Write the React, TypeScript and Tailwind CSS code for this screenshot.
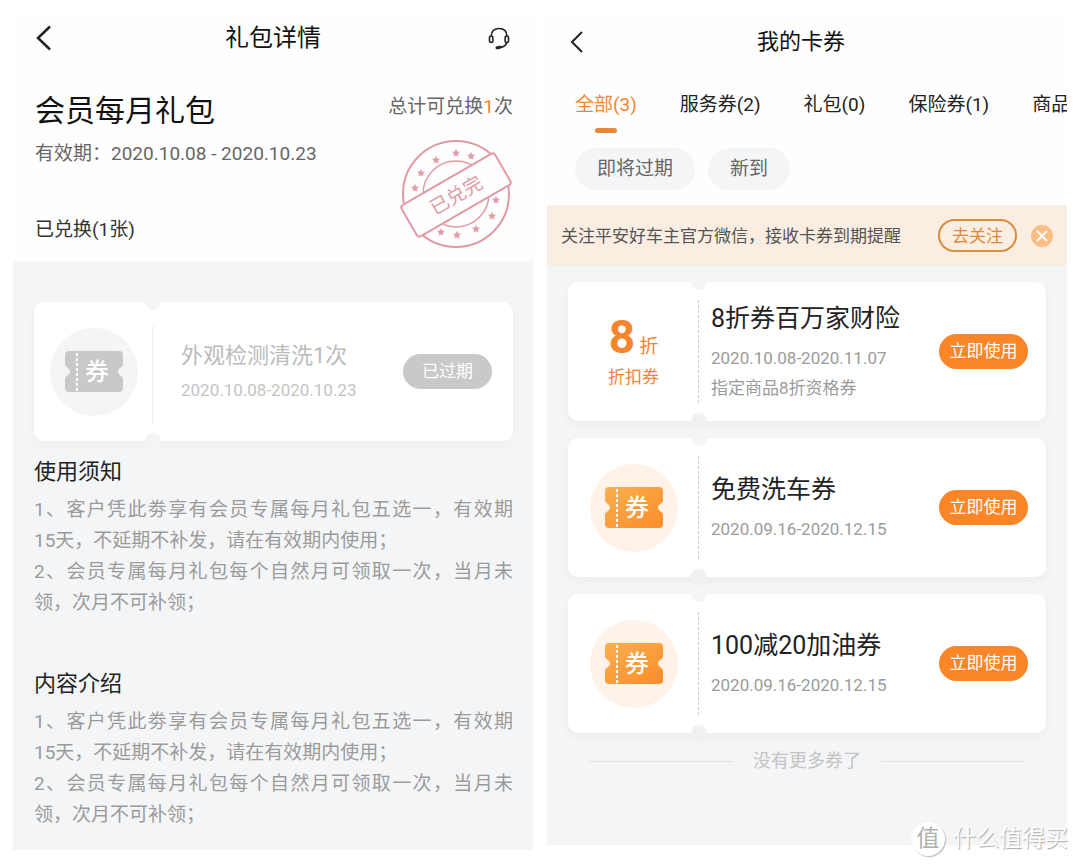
const tabs = ["全部(3)", "服务券(2)", "礼包(0)", "保险券(1)", "商品"]

const notes = [
  { title: "使用须知" },
  { title: "内容介绍" },
]

type Coupon = {
  title: string;
  date: string;
  desc?: string;
  discount?: string;
}

const coupons: Coupon[] = [
  { title: "8折券百万家财险", date: "2020.10.08-2020.11.07", desc: "指定商品8折资格券", discount: "8" },
  { title: "免费洗车券", date: "2020.09.16-2020.12.15" },
  { title: "100减20加油券", date: "2020.09.16-2020.12.15" },
]

const stars = [
  [76, 23], [91, 26], [56, 30], [41, 43], [35, 58],
  [116, 70], [112, 86], [96, 99], [77, 105], [61, 102],
]

const Ticket = ({ expired }: { expired?: boolean }) => (
  <div className={`flex size-[88px] items-center justify-center rounded-full ${expired ? "bg-[#f4f5f7]" : "bg-[#fff2e9]"}`}>
    <svg width={58} height={41} viewBox="0 0 58 41">
      <defs>
        <linearGradient id="ticket" x1="0" y1="0" x2="1" y2="1">
          <stop offset="0" stopColor="#fbb04e" />
          <stop offset="1" stopColor="#fb8c2a" />
        </linearGradient>
      </defs>
      <path
        d="M4 0H54A4 4 0 0 1 58 4V13.500C58 16 53 17 53 20.500S58 25 58 27.500V37A4 4 0 0 1 54 41H4A4 4 0 0 1 0 37V27.500C0 25 5 24 5 20.500S0 16 0 13.500V4A4 4 0 0 1 4 0Z"
        fill={expired ? "#c9c9c9" : "url(#ticket)"}
      />
      <path d="M12 2V40" stroke="#fff" strokeWidth={2} strokeDasharray="3 2" />
      <text x={32} y={29} textAnchor="middle" fontSize={24} fontWeight={500} fill="#fff">券</text>
    </svg>
  </div>
)

const Notches = ({ bottom }: { bottom: string }) => (
  <>
    <span className="absolute -top-2 -left-2 size-4 rounded-full bg-[#f4f5f7]" />
    <span className={`absolute -bottom-2 -left-2 size-4 rounded-full ${bottom}`} />
  </>
)

const Stamp = () => (
  <svg width={150} height={130} viewBox="0 0 150 130" fill="none" stroke="#e29aa5" strokeWidth={2}>
    <circle cx={76} cy={64} r={53} />
    <circle cx={76} cy={64} r={33} strokeWidth={1.500} />
    {stars.map(([x, y]) => (
      <path
        key={`${x}-${y}`}
        transform={`translate(${x} ${y})`}
        d="M0-3.600L1.100-1.200L3.500-1L1.700.700L2.200 3.100L0 1.900L-2.200 3.100L-1.700.700L-3.500-1L-1.100-1.200Z"
        fill="#e29aa5"
        stroke="#e29aa5"
        strokeWidth={0.500}
      />
    ))}
    <g transform="rotate(-30 76 65)">
      <rect x={22} y={47} width={108} height={36} rx={3} fill="#fefefe" />
      <text x={76} y={72} textAnchor="middle" fontSize={19} fill="#e29aa5" stroke="none">已兑完</text>
    </g>
  </svg>
)

const GiftDetail = () => (
  <main className="flex flex-col bg-[#fefefe]">
    <header className="flex h-[50px] items-center justify-between pr-[22px] pl-[22px]">
      <button aria-label="返回" className="w-6">
        <svg width={18} height={26} viewBox="0 0 18 26" fill="none" stroke="#222" strokeWidth={2.500}>
          <path d="M15 1.500L3 13L15 24.500" />
        </svg>
      </button>
      <h2 className="text-[24px] leading-8 text-[#111]">礼包详情</h2>
      <button aria-label="客服">
        <svg width={24} height={24} viewBox="0 0 24 24" fill="none" stroke="#222" strokeWidth={1.600}>
          <path d="M4.200 10C4.200 5 7.500 2.500 12 2.500S19.800 5 19.800 10" />
          <rect x={2.500} y={10} width={3.400} height={6.500} rx={1.700} />
          <rect x={18.100} y={10} width={3.400} height={6.500} rx={1.700} />
          <path d="M19.800 16.500C19 19.500 16.500 21 13 21.500" />
          <path d="M10 21.700L13 21.200" strokeWidth={3} strokeLinecap="round" />
        </svg>
      </button>
    </header>
    <section className="flex h-[198px] justify-between pt-[30px] pr-[20px] pl-[22px]">
      <div>
        <h1 className="text-[30px] leading-9 text-[#111]">会员每月礼包</h1>
        <p className="mt-[11px] text-[19px] leading-7 text-[#666]">有效期：2020.10.08 - 2020.10.23</p>
        <p className="mt-12 text-[19px] leading-7 text-[#333]">已兑换(1张)</p>
      </div>
      <div className="flex flex-col items-end">
        <p className="text-[19px] leading-7 text-[#666]">
          总计可兑换<span className="text-[#f5862d]">1</span>次
        </p>
        <div className="-mr-[17px] mt-[9px]">
          <Stamp />
        </div>
      </div>
    </section>
    <div className="grow bg-[#f4f5f7] pt-[41px] pr-5 pb-5 pl-[21px]">
      <article className="flex h-[139px] items-center rounded-[10px] bg-white shadow-[0_4px_12px_rgba(0,0,0,0.03)]">
        <div className="flex w-[119px] justify-center">
          <Ticket expired />
        </div>
        <div className="relative flex h-full grow items-center pr-[21px] pl-7">
          <Notches bottom="bg-[#f3f4f6]" />
          <span className="absolute top-6 bottom-4 -left-px border-l-2 border-[#f4f5f7]" />
          <div className="grow">
            <h3 className="text-[22px] leading-8 text-[#bbb]">外观检测清洗1次</h3>
            <p className="mt-[6px] mb-[2px] text-[17px] leading-6 text-[#c4c4c4]">2020.10.08-2020.10.23</p>
          </div>
          <button disabled className="h-[35px] w-[89px] rounded-full bg-[#c9c9c9] text-[17px] text-white">已过期</button>
        </div>
      </article>
      {notes.map((note) => (
        <section key={note.title} className="mt-[15px] mb-[50px] last:mb-0">
          <h3 className="text-[22px] leading-8 text-[#222]">{note.title}</h3>
          <div className="mt-[6px] text-justify text-[19px] leading-[31px] text-[#9b9b9b]">
            <p>1、客户凭此劵享有会员专属每月礼包五选一，有效期<span className="whitespace-nowrap">15天</span>，不延期不补发，请在有效期内使用；</p>
            <p>2、会员专属每月礼包每个自然月可领取一次，当月未领，次月不可补领；</p>
          </div>
        </section>
      ))}
    </div>
  </main>
)

const CouponCard = ({ coupon }: { coupon: Coupon }) => (
  <article className="flex h-[139px] items-center rounded-[10px] bg-white shadow-[0_4px_12px_rgba(0,0,0,0.04)]">
    <div className="flex w-[131px] shrink-0 flex-col items-center text-[#f5862d]">
      {coupon.discount ? (
        <>
          <p className="mt-1 flex items-baseline gap-1 text-[19px] leading-9">
            <b className="text-[46px]">{coupon.discount}</b>折
          </p>
          <p className="text-[17px] leading-6">折扣券</p>
        </>
      ) : <Ticket />}
    </div>
    <div className="relative flex h-full grow items-center pr-[18px] pl-3">
      <Notches bottom="bg-[#eff0f2]" />
      <span className="absolute top-[18px] bottom-[18px] -left-px border-l border-dashed border-[#ccc]" />
      <div className="grow">
        <h3 className="text-[25px] leading-9 text-[#222]">{coupon.title}</h3>
        <p className="mt-[6px] text-[17px] leading-[30px] text-[#9b9b9b]">{coupon.date}</p>
        {coupon.desc && <p className="text-[17px] leading-[30px] text-[#9b9b9b]">{coupon.desc}</p>}
      </div>
      <button className="h-[35px] w-[89px] rounded-full bg-[#fb8628] text-[17px] text-white">立即使用</button>
    </div>
  </article>
)

const MyCoupons = () => (
  <main className="mb-[5px] flex min-w-0 flex-col bg-[#fefefe]">
    <header className="grid h-[58px] grid-cols-[40px_1fr_74px] items-center pl-[22px]">
      <button aria-label="返回">
        <svg width={16} height={22} viewBox="0 0 16 22" fill="none" stroke="#222" strokeWidth={2}>
          <path d="M13 1L3 11L13 21" />
        </svg>
      </button>
      <h2 className="text-center text-[22px] leading-8 text-[#111]">我的卡券</h2>
    </header>
    <nav className="flex gap-[43px] overflow-hidden pt-[19px] pl-7 text-[19px] leading-[30px] whitespace-nowrap text-[#222]">
      {tabs.map((tab, i) => (
        <button key={tab} className={i == 0 ? "flex flex-col items-center gap-2 text-[#f5862d]" : "flex flex-col"}>
          {tab}
          {i == 0 && <span className="h-[5px] w-[22px] rounded-full bg-[#e8863a]" />}
        </button>
      ))}
    </nav>
    <div className="flex gap-[13px] pt-[15px] pb-[15px] pl-7 text-[19px] text-[#666]">
      <button className="h-[42px] rounded-full bg-[#f4f5f7] px-[22px]">即将过期</button>
      <button className="h-[42px] rounded-full bg-[#f4f5f7] px-[22px]">新到</button>
    </div>
    <aside className="flex h-[61px] items-center bg-[#faede1] pr-[14px] pl-[14px]">
      <p className="grow text-[17px] leading-6 text-[#555]">关注平安好车主官方微信，接收卡券到期提醒</p>
      <button className="h-[33px] w-[79px] rounded-full border-2 border-[#dd8d3e] text-[17px] leading-6 text-[#e0883a]">去关注</button>
      <button aria-label="关闭" className="ml-[14px]">
        <svg width={22} height={22} viewBox="0 0 22 22" fill="none">
          <circle cx={11} cy={11} r={11} fill="#fbbd84" />
          <path d="M6 6L16 16M16 6L6 16" stroke="#fff" strokeWidth={2} />
        </svg>
      </button>
    </aside>
    <div className="grow bg-[#f4f5f7] px-[21px] pt-4">
      <div className="flex flex-col gap-[17px]">
        {coupons.map((coupon) => <CouponCard key={coupon.title} coupon={coupon} />)}
      </div>
      <p className="mt-4 flex items-center gap-5 px-5 text-[18px] leading-6 text-[#c4c4c4] before:h-px before:grow before:bg-[#e4e4e6] after:h-px after:grow after:bg-[#e4e4e6]">
        没有更多券了
      </p>
    </div>
  </main>
)

export default function App() {
  return (
    <div className="relative min-h-screen bg-white p-[13px] pb-[15px] font-[Roboto,'Noto_Sans_CJK_SC',sans-serif]">
      <div className="grid grid-cols-2 gap-[14px]">
        <GiftDetail />
        <MyCoupons />
      </div>
      <div className="absolute right-3 bottom-2 flex items-center gap-2 text-white [text-shadow:1px_1px_1px_#aaa]">
        <span className="flex size-[34px] items-center justify-center rounded-full bg-white text-[23px] text-[#b0b0b0] shadow-[1px_1px_1px_#bbb] [text-shadow:none]">值</span>
        <span className="text-[23px] leading-9">什么值得买</span>
      </div>
    </div>
  )
}
